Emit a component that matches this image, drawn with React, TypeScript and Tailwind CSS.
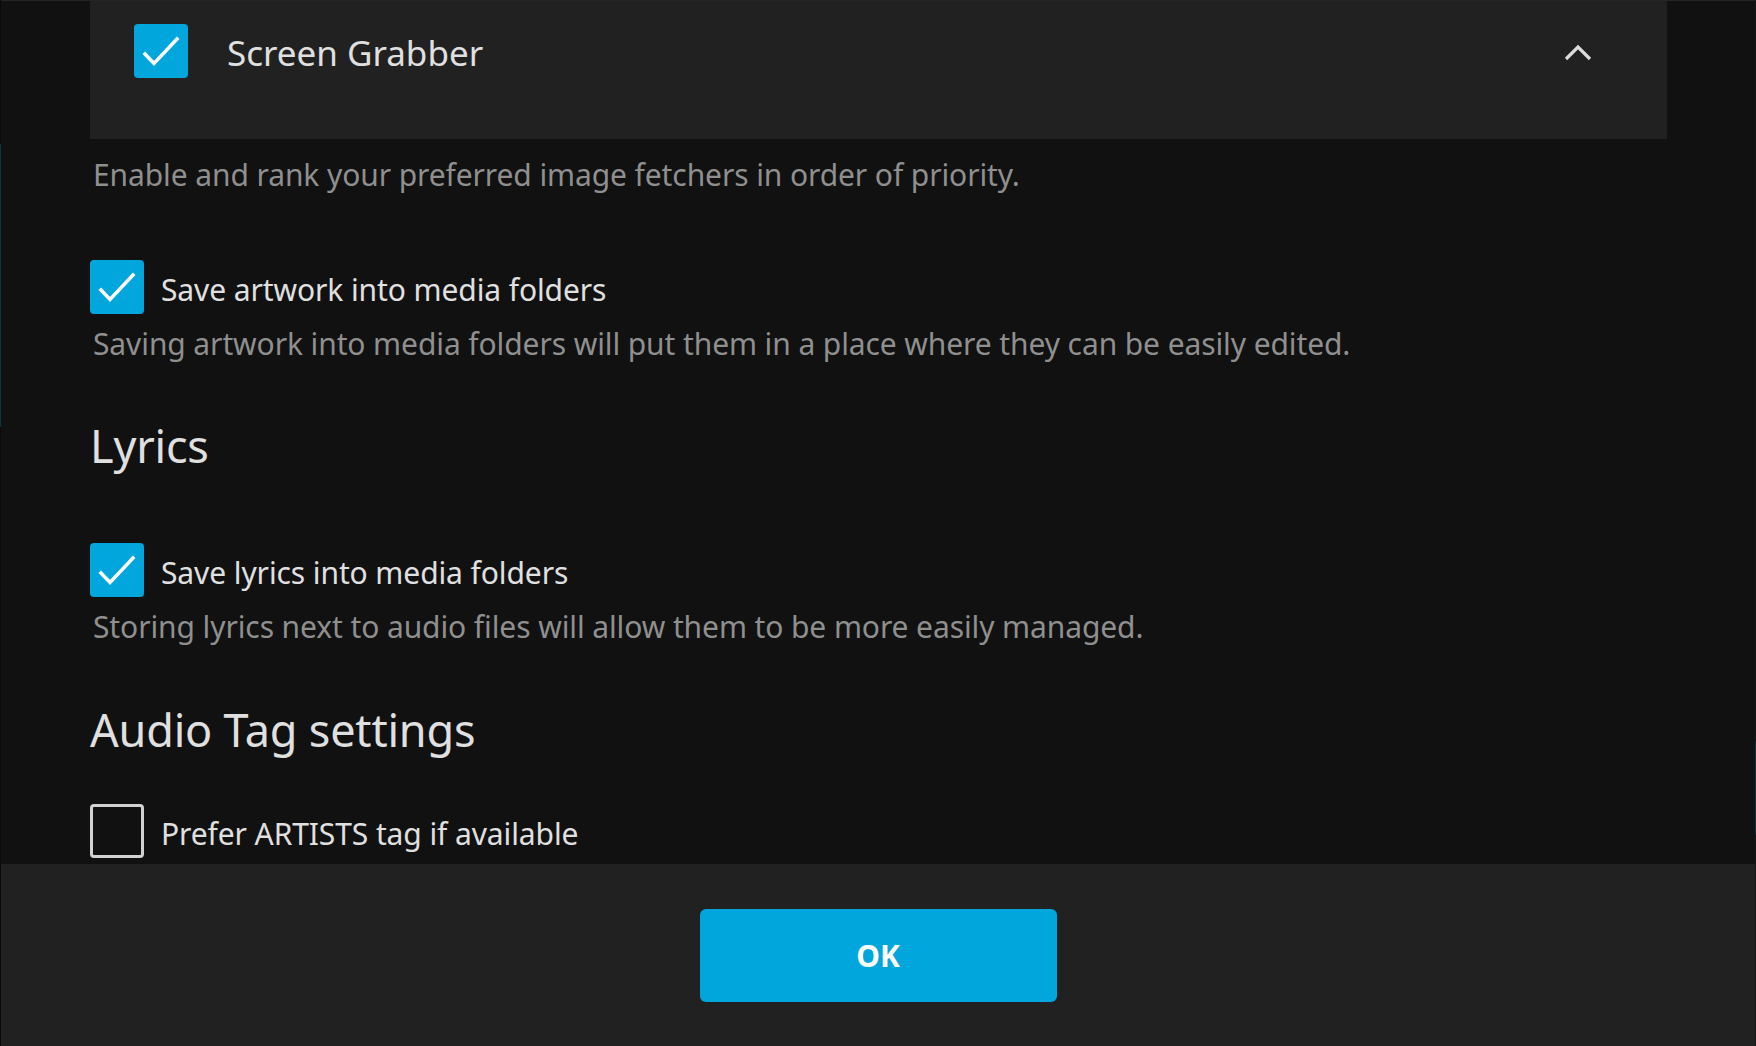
function Check({ checked }: { checked: boolean }) {
  if (!checked) {
    return <div className="h-[54px] w-[54px] shrink-0 rounded-[4px] border-[3px] border-[#d2d2d2]" />;
  }
  return (
    <div className="flex h-[54px] w-[54px] shrink-0 items-center justify-center rounded-[4px] bg-[#00a6dc]">
      <svg width="54" height="54" viewBox="0 0 54 54" fill="none">
        <path d="M11 30 L20 39.5 L43 15" stroke="#ffffff" strokeWidth="3.5" strokeLinecap="square" />
      </svg>
    </div>
  );
}

function Option({ label, checked }: { label: string; checked: boolean }) {
  return (
    <div className="flex h-[54px] items-center gap-[17px]">
      <Check checked={checked} />
      <span className="pt-[5px] text-[30px] leading-[40px] tracking-[-0.1px] text-[#e0e0e0]">{label}</span>
    </div>
  );
}

function Hint({ children, className }: { children: string; className: string }) {
  return (
    <p className={`pl-[3px] text-[30px] leading-[40px] tracking-[-0.1px] text-[#8f8f8f] ${className}`}>{children}</p>
  );
}

export default function App() {
  return (
    <div className="flex h-[1046px] w-[1756px] overflow-hidden bg-[#111111] font-['Noto_Sans',sans-serif]">
      <div className="flex w-px shrink-0 flex-col bg-[#0a0a0a]">
        <div className="mt-[144px] h-[283px] bg-[#0b3446]" />
      </div>

      <div className="flex min-w-0 flex-1 flex-col">
        <main className="flex-1 overflow-hidden border-t border-[#242424] pl-[89px] pr-[88px]">
          <section className="h-[138px] bg-[#212121] pt-[23px]">
            <div className="flex h-[54px] items-center pl-[44px] pr-[75px]">
              <Check checked />
              <span className="ml-[39px] flex-1 pt-[4px] text-[35px] leading-[44px] text-[#e0e0e0]">
                Screen Grabber
              </span>
              <svg className="mt-[4px]" width="28" height="18" viewBox="0 0 28 18" fill="none">
                <path d="M2 15 L14 3 L26 15" stroke="#dcdcdc" strokeWidth="3.2" />
              </svg>
            </div>
          </section>

          <Hint className="mt-[16px]">Enable and rank your preferred image fetchers in order of priority.</Hint>

          <div className="mt-[65px]">
            <Option label="Save artwork into media folders" checked />
          </div>
          <Hint className="mt-[10px]">
            Saving artwork into media folders will put them in a place where they can be easily edited.
          </Hint>

          <h2 className="mt-[54px] text-[45px] leading-[56px] tracking-[-0.2px] text-[#e0e0e0]">Lyrics</h2>

          <div className="mt-[69px]">
            <Option label="Save lyrics into media folders" checked />
          </div>
          <Hint className="mt-[10px]">Storing lyrics next to audio files will allow them to be more easily managed.</Hint>

          <h2 className="mt-[55px] text-[45px] leading-[56px] tracking-[-0.2px] text-[#e0e0e0]">
            Audio Tag settings
          </h2>

          <div className="mt-[46px]">
            <Option label="Prefer ARTISTS tag if available" checked={false} />
          </div>
        </main>

        <footer className="flex h-[182px] shrink-0 items-center justify-center bg-[#212121]">
          <button className="h-[93px] w-[357px] rounded-[6px] bg-[#00a6dc] text-[30px] font-bold text-white">
            OK
          </button>
        </footer>
      </div>

      <div className="flex w-px shrink-0 flex-col bg-[#151515]">
        <div className="mt-[741px] h-[94px] bg-[#0b3446]" />
      </div>
    </div>
  );
}
